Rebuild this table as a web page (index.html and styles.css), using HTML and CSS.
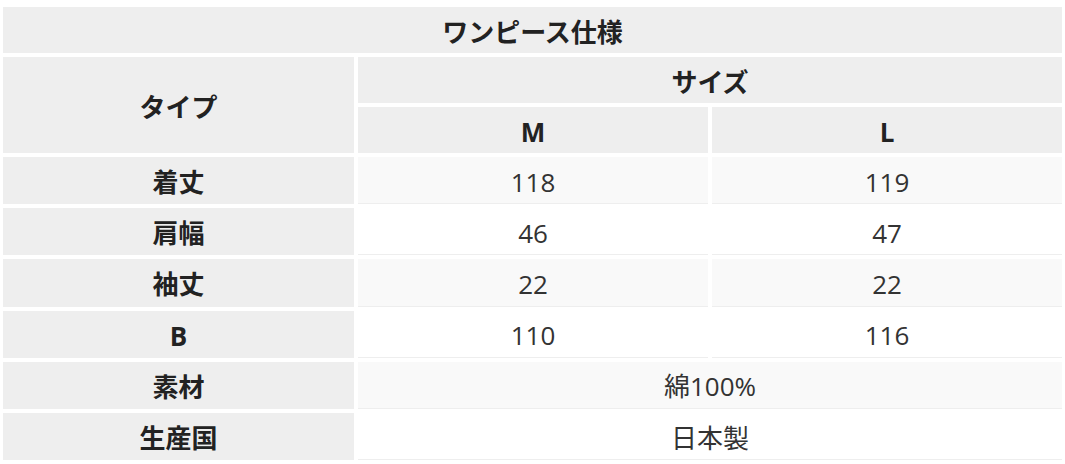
FILE: index.html
```html
<!DOCTYPE html>
<html lang="ja">
<head>
<meta charset="utf-8">
<title>ワンピース仕様</title>
<link rel="stylesheet" href="styles.css">
</head>
<body>
<div class="spec">
  <div class="cell head title">ワンピース仕様</div>
  <div class="cell head type">タイプ</div>
  <div class="cell head size">サイズ</div>
  <div class="cell head">M</div>
  <div class="cell head">L</div>

  <div class="cell head">着丈</div>
  <div class="cell data odd">118</div>
  <div class="cell data odd">119</div>

  <div class="cell head">肩幅</div>
  <div class="cell data">46</div>
  <div class="cell data">47</div>

  <div class="cell head">袖丈</div>
  <div class="cell data odd">22</div>
  <div class="cell data odd">22</div>

  <div class="cell head latin">B</div>
  <div class="cell data">110</div>
  <div class="cell data">116</div>

  <div class="cell head">素材</div>
  <div class="cell data odd wide">綿100%</div>

  <div class="cell head">生産国</div>
  <div class="cell data wide">日本製</div>
</div>
</body>
</html>
```

FILE: styles.css
```css
html, body {
  margin: 0;
  padding: 0;
  background: #ffffff;
}

body {
  font-family: "Open Sans", "Noto Sans CJK JP", sans-serif;
  color: #222222;
}

.spec {
  display: grid;
  grid-template-columns: 351px 1fr 1fr;
  grid-template-rows: 46px 46px 46px;
  grid-auto-rows: 47.2px;
  gap: 4px;
  padding: 7px 3px 0 3px;
}

.cell {
  display: flex;
  align-items: center;
  justify-content: center;
  font-size: 26px;
  line-height: 1;
  padding-top: 3px;
  box-sizing: border-box;
}

.head {
  background: #eeeeee;
  font-weight: 700;
  color: #222222;
}

.title {
  grid-column: 1 / -1;
}

.type {
  grid-row: span 2;
}

.size {
  grid-column: 2 / 4;
}

.data {
  background: #ffffff;
  border-bottom: 1px solid #eeeeee;
  font-weight: 400;
  color: #333333;
}

.data.odd {
  background: #f9f9f9;
}

.wide {
  grid-column: 2 / 4;
}
```
